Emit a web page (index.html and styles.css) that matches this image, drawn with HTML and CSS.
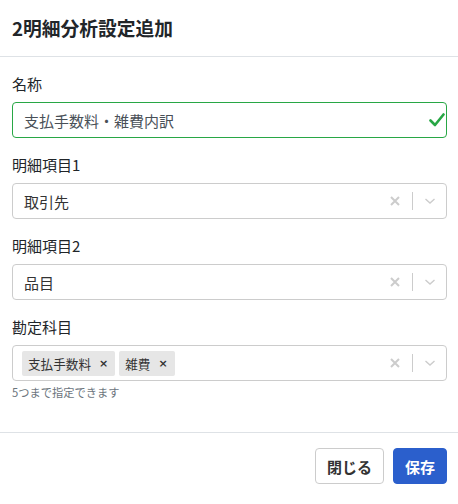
FILE: index.html
```html
<!DOCTYPE html>
<html lang="ja">
<head>
  <meta charset="UTF-8" />
  <title>2明細分析設定追加</title>
  <link rel="stylesheet" href="styles.css">
</head>
<body>
  <div class="modal">
    <div class="modal-header">
      <h5 class="modal-title">2明細分析設定追加</h5>
    </div>
    <div class="modal-body">
      <div class="form-group">
        <label class="form-label">名称</label>
        <div class="input-valid">
          <input class="form-control" type="text" value="支払手数料・雑費内訳" />
          <svg class="valid-icon" width="16" height="14" viewBox="0 0 16 14">
            <path d="M1.5 7.5 L6 12 L14.5 1.5" fill="none" stroke="#28a745" stroke-width="2.6" stroke-linecap="round" stroke-linejoin="round"/>
          </svg>
        </div>
      </div>
      <div class="form-group">
        <label class="form-label">明細項目1</label>
        <div class="select">
          <div class="select-value">取引先</div>
          <div class="select-indicators">
            <svg class="clear-icon" width="20" height="20" viewBox="0 0 20 20"><path d="M6 6 L14 14 M14 6 L6 14" stroke="#ccc" stroke-width="2"/></svg>
            <span class="sep"></span>
            <svg class="drop-icon" width="20" height="20" viewBox="0 0 20 20"><path d="M5.5 8 L10 12 L14.5 8" fill="none" stroke="#ccc" stroke-width="1.4"/></svg>
          </div>
        </div>
      </div>
      <div class="form-group">
        <label class="form-label">明細項目2</label>
        <div class="select">
          <div class="select-value">品目</div>
          <div class="select-indicators">
            <svg class="clear-icon" width="20" height="20" viewBox="0 0 20 20"><path d="M6 6 L14 14 M14 6 L6 14" stroke="#ccc" stroke-width="2"/></svg>
            <span class="sep"></span>
            <svg class="drop-icon" width="20" height="20" viewBox="0 0 20 20"><path d="M5.5 8 L10 12 L14.5 8" fill="none" stroke="#ccc" stroke-width="1.4"/></svg>
          </div>
        </div>
      </div>
      <div class="form-group">
        <label class="form-label">勘定科目</label>
        <div class="select multi">
          <div class="select-value tags">
            <span class="tag">支払手数料<span class="tag-x">×</span></span>
            <span class="tag">雑費<span class="tag-x">×</span></span>
          </div>
          <div class="select-indicators">
            <svg class="clear-icon" width="20" height="20" viewBox="0 0 20 20"><path d="M6 6 L14 14 M14 6 L6 14" stroke="#ccc" stroke-width="2"/></svg>
            <span class="sep"></span>
            <svg class="drop-icon" width="20" height="20" viewBox="0 0 20 20"><path d="M5.5 8 L10 12 L14.5 8" fill="none" stroke="#ccc" stroke-width="1.4"/></svg>
          </div>
        </div>
        <div class="form-text">5つまで指定できます</div>
      </div>
    </div>
    <div class="modal-footer">
      <button class="btn btn-light">閉じる</button>
      <button class="btn btn-primary">保存</button>
    </div>
  </div>
</body>
</html>
```

FILE: styles.css
```css
body {
  margin: 0;
  background: #fff;
  color: #212529;
  font-family: "Noto Sans CJK JP", "Noto Sans", sans-serif;
  font-size: 15px;
}
.modal {
  width: 458px;
}
.modal-header {
  padding: 12px 12px;
  border-bottom: 1px solid #dee2e6;
}
.modal-title {
  margin: 0;
  font-size: 18.75px;
  font-weight: bold;
  line-height: 32px;
  color: #212529;
}
.modal-body {
  padding: 16px 11px 18px 12px;
}
.form-group {
  margin-bottom: 16px;
}
.form-group:last-child {
  margin-bottom: 14px;
}
.form-label {
  display: block;
  line-height: 22px;
  margin-bottom: 7px;
  color: #212529;
}
.input-valid {
  position: relative;
}
.form-control {
  box-sizing: border-box;
  width: 100%;
  height: 36px;
  padding: 0 11px;
  font-family: inherit;
  font-size: 15px;
  color: #495057;
  border: 1px solid #28a745;
  border-radius: 4px;
  outline: none;
}
.valid-icon {
  position: absolute;
  right: 2px;
  top: 11px;
}
.select {
  box-sizing: border-box;
  display: flex;
  align-items: center;
  height: 36px;
  border: 1px solid #ccc;
  border-radius: 4px;
  background: #fff;
}
.select-value {
  flex: 1;
  padding-left: 11px;
  color: #333;
}
.select-value.tags {
  display: flex;
  gap: 4px;
  padding-left: 9px;
}
.tag {
  display: flex;
  align-items: center;
  height: 25px;
  padding: 0 7px 0 6px;
  background: #e6e6e6;
  border-radius: 2px;
  font-size: 12.6px;
  color: #333;
}
.tag-x {
  margin-left: 8px;
  font-family: "DejaVu Sans", sans-serif;
  font-weight: bold;
  font-size: 11px;
}
.select-indicators {
  display: flex;
  align-items: center;
  padding-right: 6px;
}
.clear-icon {
  margin-right: 7px;
}
.sep {
  width: 1px;
  height: 18px;
  background: #ccc;
  margin-right: 7px;
}
.form-text {
  margin-top: 4px;
  font-size: 11.25px;
  color: #6c757d;
  line-height: 15px;
}
.modal-footer {
  display: flex;
  justify-content: flex-end;
  gap: 9px;
  padding: 15px 11px 16px;
  border-top: 1px solid #dee2e6;
}
.btn {
  height: 36px;
  padding: 0 11px;
  font-family: inherit;
  font-size: 15px;
  font-weight: bold;
  border-radius: 4px;
  cursor: pointer;
}
.btn-light {
  background: #fff;
  color: #333;
  border: 1px solid #ccc;
}
.btn-primary {
  background: #2b5fcc;
  color: #fff;
  border: 1px solid #2b5fcc;
}
```
